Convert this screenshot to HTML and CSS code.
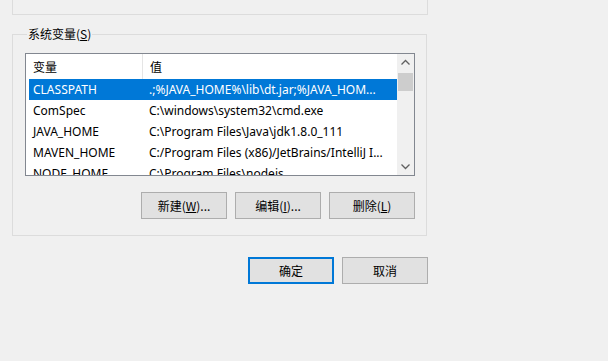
FILE: index.html
```html
<!DOCTYPE html>
<html lang="zh-CN">
<head>
    <meta charset="UTF-8">
    <title>环境变量</title>
    <link rel="stylesheet" href="styles.css">
</head>
<body>
    <div class="top-panel"></div>

    <fieldset class="group">
        <legend>系统变量(<u>S</u>)</legend>

        <div class="list">
            <div class="list-body">
                <div class="list-head">
                    <div class="col">变量</div>
                    <div class="col">值</div>
                </div>
                <div class="row selected">
                    <div class="col">CLASSPATH</div>
                    <div class="col">.;%JAVA_HOME%\lib\dt.jar;%JAVA_HOM...</div>
                </div>
                <div class="row">
                    <div class="col">ComSpec</div>
                    <div class="col">C:\windows\system32\cmd.exe</div>
                </div>
                <div class="row">
                    <div class="col">JAVA_HOME</div>
                    <div class="col">C:\Program Files\Java\jdk1.8.0_111</div>
                </div>
                <div class="row">
                    <div class="col">MAVEN_HOME</div>
                    <div class="col">C:/Program Files (x86)/JetBrains/IntelliJ I...</div>
                </div>
                <div class="row">
                    <div class="col">NODE_HOME</div>
                    <div class="col">C:\Program Files\nodejs</div>
                </div>
            </div>
            <div class="scrollbar">
                <svg class="arrow" width="17" height="17" viewBox="0 0 17 17">
                    <path d="M4.5 10.5 L8.5 6.5 L12.5 10.5" fill="none" stroke="#606060" stroke-width="1.3"/>
                </svg>
                <div class="track">
                    <div class="thumb"></div>
                </div>
                <svg class="arrow" width="17" height="17" viewBox="0 0 17 17">
                    <path d="M4.5 6.5 L8.5 10.5 L12.5 6.5" fill="none" stroke="#606060" stroke-width="1.3"/>
                </svg>
            </div>
        </div>

        <div class="buttons">
            <button class="btn">新建(<u>W</u>)...</button>
            <button class="btn">编辑(<u>I</u>)...</button>
            <button class="btn">删除(<u>L</u>)</button>
        </div>
    </fieldset>

    <div class="dialog-buttons">
        <button class="btn default">确定</button>
        <button class="btn">取消</button>
    </div>
</body>
</html>
```

FILE: styles.css
```css
body {
    margin: 0;
    background-color: #f0f0f0;
    font-family: "Noto Sans", "Noto Sans CJK SC", sans-serif;
    font-size: 12px;
    color: #000;
}
.top-panel {
    width: 414px;
    height: 14px;
    margin-left: 12px;
    border: 1px solid #dcdcdc;
    border-top: none;
}
.group {
    width: 390px;
    margin: 11px 0 0 12px;
    padding: 11px 11px 16px 12px;
    border: 1px solid #dcdcdc;
}
.group legend {
    margin-left: 2px;
    padding: 0 1px;
    line-height: 16px;
    font-family: "Noto Sans CJK SC", sans-serif;
}
.list {
    display: flex;
    height: 121px;
    border: 1px solid #828790;
    background-color: #fff;
    overflow: hidden;
}
.list-body {
    flex: 1;
    overflow: hidden;
}
.list-head {
    display: grid;
    grid-template-columns: 117px 1fr;
    height: 25px;
    line-height: 25px;
    font-family: "Noto Sans CJK SC", sans-serif;
}
.list-head .col {
    padding-left: 7px;
}
.list-head .col:first-child {
    border-right: 1px solid #e5e5e5;
}
.row {
    display: grid;
    grid-template-columns: 116px 1fr;
    height: 21px;
    line-height: 21px;
    margin-left: 3px;
    white-space: nowrap;
}
.row .col {
    padding-left: 4px;
    overflow: hidden;
}
.row.selected {
    background-color: #0078d7;
    color: #fff;
}
.scrollbar {
    display: flex;
    flex-direction: column;
    width: 17px;
    background-color: #f0f0f0;
}
.arrow {
    display: block;
    flex: none;
}
.track {
    flex: 1;
    padding: 2px 1px 0;
}
.thumb {
    height: 18px;
    background-color: #cdcdcd;
}
.buttons {
    display: flex;
    justify-content: flex-end;
    gap: 8px;
    margin-top: 16px;
}
.btn {
    width: 86px;
    height: 27px;
    padding: 0;
    border: 1px solid #adadad;
    background-color: #e1e1e1;
    font-family: "Noto Sans CJK SC", sans-serif;
    font-size: 12px;
    color: #000;
}
.btn.default {
    border: 2px solid #0078d7;
}
.dialog-buttons {
    display: flex;
    justify-content: flex-end;
    gap: 8px;
    width: 428px;
    margin-top: 21px;
}
```
